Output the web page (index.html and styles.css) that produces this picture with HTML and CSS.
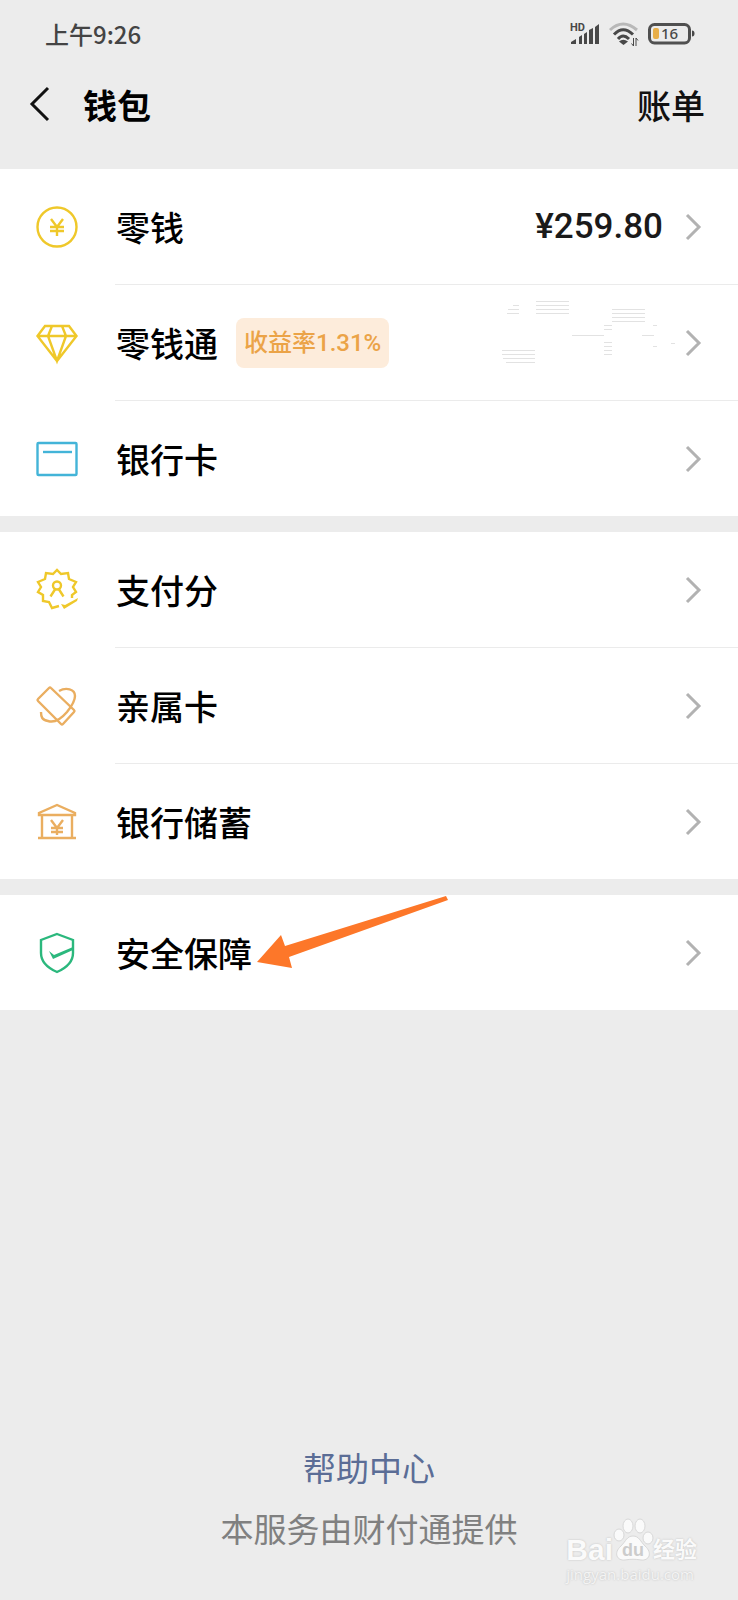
FILE: index.html
```
<!DOCTYPE html>
<html lang="zh-CN">
<head>
  <meta charset="UTF-8" />
  <meta name="viewport" content="width=device-width, initial-scale=1" />
  <title>钱包</title>
  <link rel="stylesheet" href="styles.css">
</head>
<body>
  <div class="status-bar">
    <span class="time">上午9:26</span>
    <div class="status-icons">
      <svg class="signal" width="30" height="24" viewBox="0 0 30 24">
        <text x="0" y="9">HD</text>
        <path d="M1 22v-2l5-3v5zM9 22v-7l3-2v9zM14 22V12l3-2v12zM19 22V8l4-2v16zM25 22V5l4-3v20z" />
      </svg>
      <svg class="wifi" width="30" height="24" viewBox="0 0 30 24">
        <path class="wifi-off" d="M1 8Q14 -4 28 8" />
        <path d="M5 12.500Q14 3 24 12.500M9 17Q14 11 20 17" />
        <path class="solid" d="M10 19.500Q14 16 19 19.500L14.500 23z" />
        <path class="arrows" d="M24.500 16v8l-2-2.500M27 24v-8l2 2.500" />
      </svg>
      <svg class="battery" width="48" height="24" viewBox="0 0 48 24">
        <rect class="shell" x="1.500" y="2.500" width="40" height="18.500" rx="5" />
        <rect class="level" x="5" y="6" width="6" height="11" rx="2" />
        <path class="cap" d="M44 8.500q2.500 0 2.500 3t-2.500 3z" />
        <text x="13" y="17">16</text>
      </svg>
    </div>
  </div>

  <header class="nav">
    <button type="button" class="back" aria-label="返回">
      <svg width="20" height="36" viewBox="0 0 20 36"><path d="M18 2L2 18l16 16" /></svg>
    </button>
    <h1>钱包</h1>
    <a href="#bill" class="bill">账单</a>
  </header>

  <main>
    <!-- Balance -->
    <ul class="group">
      <li>
        <a href="#balance" class="row">
          <svg class="icon yellow" viewBox="0 0 42 42">
            <circle cx="21" cy="21" r="19.500" />
            <path d="M15 13l6 8 6-8M14 21h14M14 25h14M21 21v9" />
          </svg>
          <span class="content">
            <span class="label">零钱</span>
            <span class="amount">¥259.80</span>
            <svg class="chevron" viewBox="0 0 16 28"><path d="M2 2l12 12L2 26" /></svg>
          </span>
        </a>
      </li>
      <li>
        <a href="#fund" class="row">
          <svg class="icon yellow" viewBox="0 0 42 42">
            <path d="M9 4h24l7.500 10L21 39 1.500 14zM1.500 14h39M16 4l-4 10 9 25 9-25-4-10" />
          </svg>
          <span class="content">
            <span class="label">零钱通</span>
            <span class="tag">收益率1.31%</span>
            <svg class="mask" width="170" height="86" viewBox="0 0 170 86">
              <path d="M20 5.500h6M15 9.500h11M14 13.500h12M43 1.500h33M43 5.500h33M43 9.500h33M43 13.500h33M119 9.500h33M119 13.500h33M119 17.500h33M119 21.500h33M79 35.500h32M111 25.500h8M111 29.500h8M111 42.500h8M111 46.500h8M111 50.500h8M111 54.500h8M149 35.500h12M160 25.500h4M160 46.500h4M178 43.500h4M9 50.500h33M9 54.500h33M10 58.500h32M13 62.500h29" />
            </svg>
            <svg class="chevron" viewBox="0 0 16 28"><path d="M2 2l12 12L2 26" /></svg>
          </span>
        </a>
      </li>
      <li>
        <a href="#cards" class="row">
          <svg class="icon blue" viewBox="0 0 42 42">
            <rect x="1.500" y="5" width="39" height="32" rx="1" />
            <path d="M7 14h29" />
          </svg>
          <span class="content">
            <span class="label">银行卡</span>
            <svg class="chevron" viewBox="0 0 16 28"><path d="M2 2l12 12L2 26" /></svg>
          </span>
        </a>
      </li>
    </ul>

    <!-- Services -->
    <ul class="group">
      <li>
        <a href="#score" class="row">
          <svg class="icon yellow" viewBox="0 0 42 42">
            <path d="M23 37l-7 2-3-6-6-1V26l-5-3 3-5-3-5 7-3 1-6 7 1 4-4 4 4 7-1 1 6 7 3-3 5 3 5-4 3v3" />
            <circle cx="21" cy="16.500" r="4" />
            <path d="M14.500 27.500l4.500-7M27.500 27.500l-4.500-7" />
            <path class="solid" d="M25 35l4 1 13-7-1 3-13 8z" />
          </svg>
          <span class="content">
            <span class="label">支付分</span>
            <svg class="chevron" viewBox="0 0 16 28"><path d="M2 2l12 12L2 26" /></svg>
          </span>
        </a>
      </li>
      <li>
        <a href="#family" class="row">
          <svg class="icon orange" viewBox="0 0 42 42">
            <path d="M13 3L2 14q-1 1 0 2l23 23q1 1 2 0l11-12q1-1 0-2L15 3q-1-1-2 0z" />
            <path d="M23 6C30 2 39 4 39 11c0 6-4 11-8 16-6 7-13 11-19 9-6-1-7-4-7-9" />
          </svg>
          <span class="content">
            <span class="label">亲属卡</span>
            <svg class="chevron" viewBox="0 0 16 28"><path d="M2 2l12 12L2 26" /></svg>
          </span>
        </a>
      </li>
      <li>
        <a href="#savings" class="row">
          <svg class="icon orange" viewBox="0 0 42 42">
            <path d="M3 14v-2l18-8 18 8v2zM6 15v22M36 15v22M2 37h38" />
            <path d="M15 19l6 8 6-8M15 27h12M15 31h12M21 27v7" />
          </svg>
          <span class="content">
            <span class="label">银行储蓄</span>
            <svg class="chevron" viewBox="0 0 16 28"><path d="M2 2l12 12L2 26" /></svg>
          </span>
        </a>
      </li>
    </ul>

    <!-- Security -->
    <ul class="group">
      <li>
        <a href="#security" class="row">
          <svg class="icon green" viewBox="0 0 42 42">
            <path d="M21 2l16 6v13q0 12-16 19Q5 33 5 21V8z" />
            <path class="solid" d="M13 19l5 4 19-8v3l-20 9z" />
          </svg>
          <span class="content">
            <span class="label">安全保障</span>
            <svg class="chevron" viewBox="0 0 16 28"><path d="M2 2l12 12L2 26" /></svg>
          </span>
        </a>
        <svg class="pointer" width="192" height="76" viewBox="0 0 192 76">
          <path d="M0 67l24-27 4 11L189 1l2 4L32 62l3 11z" />
        </svg>
      </li>
    </ul>
  </main>

  <footer>
    <a href="#help">帮助中心</a>
    <p>本服务由财付通提供</p>
  </footer>

  <div class="watermark">
    <div class="brand">
      <span class="bai">Bai</span>
      <span class="paw">
        <svg width="40" height="44" viewBox="0 0 40 44">
          <ellipse cx="6" cy="17" rx="5" ry="6" />
          <ellipse cx="15" cy="8" rx="5" ry="7" />
          <ellipse cx="27" cy="8" rx="5" ry="7" />
          <ellipse cx="35" cy="20" rx="5" ry="6" />
          <path d="M20 18c6 0 7 5 12 10 8 7 4 15-4 14-6-1-10-1-16 0-8 1-12-7-4-14 5-5 6-10 12-10z" />
        </svg>
        <span class="du">du</span>
      </span>
      <span class="jingyan">经验</span>
    </div>
    <div class="url">jingyan.baidu.com</div>
  </div>
</body>
</html>
```
FILE: styles.css
```
* {
  margin: 0;
  padding: 0;
  box-sizing: border-box;
}

body {
  position: relative;
  display: flex;
  flex-direction: column;
  min-height: 100vh;
  background: #ececec;
  color: #000;
  font-family: 'Noto Sans CJK SC', sans-serif;
  font-size: 34px;
}

a {
  color: inherit;
  text-decoration: none;
}

svg {
  flex-shrink: 0;
  overflow: visible;
}

/* Status bar */
.status-bar {
  display: flex;
  align-items: center;
  justify-content: space-between;
  height: 67px;
  padding: 0 42px 0 45px;
}

.time {
  color: #444;
  font-size: 24px;
  font-weight: 500;
}

.status-icons {
  display: flex;
  align-items: center;
  gap: 9px;
  fill: #484848;
  font-family: Roboto, sans-serif;
}

.signal text {
  font-size: 11px;
  font-weight: 700;
}

.wifi path {
  fill: none;
  stroke: #484848;
  stroke-width: 3;
}

.wifi .wifi-off {
  stroke: #b8b8b8;
}

.wifi .solid {
  fill: #484848;
  stroke: none;
}

.wifi .arrows {
  stroke-width: 1;
}

.battery .shell {
  fill: none;
  stroke: #505050;
  stroke-width: 3;
}

.battery .level {
  fill: #e8ae48;
}

.battery text {
  font-family: 'Noto Sans', sans-serif;
  font-size: 15px;
  font-weight: 500;
}

/* Title */
.nav {
  display: flex;
  align-items: center;
  height: 102px;
  padding: 0 33px 28px 30px;
}

.back {
  display: flex;
  width: 53px;
  border: none;
  background: none;
  cursor: pointer;
}

.back path {
  fill: none;
  stroke: #111;
  stroke-width: 3;
}

.nav h1 {
  font-size: 34px;
  font-weight: 700;
}

.bill {
  margin-left: auto;
  color: #111;
  font-weight: 500;
}

/* Menu */
.group {
  margin-bottom: 16px;
  background: #fff;
  list-style: none;
}

.group li {
  position: relative;
}

.row {
  display: flex;
  align-items: center;
  padding-left: 36px;
}

.content {
  display: flex;
  flex: 1;
  align-items: center;
  height: 116px;
  margin-left: 37px;
  padding-right: 37px;
  border-bottom: 1px solid #ebebeb;
}

.group li:last-child .content {
  height: 115px;
  border-bottom: none;
}

.icon {
  width: 42px;
  height: 42px;
  fill: none;
  stroke: currentColor;
  stroke-width: 2.4;
}

.icon .solid {
  fill: currentColor;
  stroke: none;
}

.yellow {
  color: #efc82a;
}

.blue {
  color: #43b4d8;
}

.orange {
  color: #eaae60;
}

.green {
  color: #2bb87d;
}

.label {
  margin-left: 1px;
  font-weight: 500;
}

.tag {
  margin-left: 18px;
  padding: 0 8px;
  border-radius: 8px;
  background: #fdecdb;
  color: #eba347;
  font-family: Roboto, 'Noto Sans CJK SC', sans-serif;
  font-size: 24px;
  font-weight: 500;
  line-height: 50px;
}

.amount,
.mask {
  margin-left: auto;
  margin-right: 22px;
}

.amount {
  color: #1a1a1a;
  font-family: Roboto, sans-serif;
  font-size: 35px;
  font-weight: 500;
}

.mask path {
  stroke: #e2e2e2;
}

.chevron {
  width: 16px;
  height: 28px;
  margin-left: auto;
  fill: none;
  stroke: #b2b2b2;
  stroke-width: 3;
}

.amount + .chevron,
.mask + .chevron {
  margin-left: 0;
}

.pointer {
  position: absolute;
  top: 0;
  left: 257px;
  fill: #fd7729;
}

/* Footer */
footer {
  margin-top: auto;
  padding-bottom: 41px;
  color: #808080;
  font-size: 33px;
  line-height: 61px;
  text-align: center;
}

footer a {
  color: #5b6d96;
}

.watermark {
  position: absolute;
  right: 41px;
  bottom: 16px;
  color: #fafafa;
  font-family: 'Liberation Sans', 'Noto Sans CJK SC', sans-serif;
  text-shadow: 0 0 2px #bbb;
}

.brand {
  display: flex;
  align-items: flex-end;
  height: 46px;
  line-height: 28px;
}

.bai {
  font-size: 30px;
  font-weight: 700;
}

.paw {
  position: relative;
  height: 46px;
}

.paw svg {
  display: block;
  fill: #fafafa;
  stroke: #d8d8d8;
}

.du {
  position: absolute;
  bottom: 2px;
  left: 9px;
  color: #ccc;
  font-size: 18px;
  font-weight: 700;
  line-height: 24px;
  text-shadow: none;
}

.jingyan {
  font-size: 22px;
  font-weight: 700;
}

.url {
  color: #f4f4f4;
  font-family: 'Open Sans', sans-serif;
  font-size: 15px;
  line-height: 20px;
}
```
